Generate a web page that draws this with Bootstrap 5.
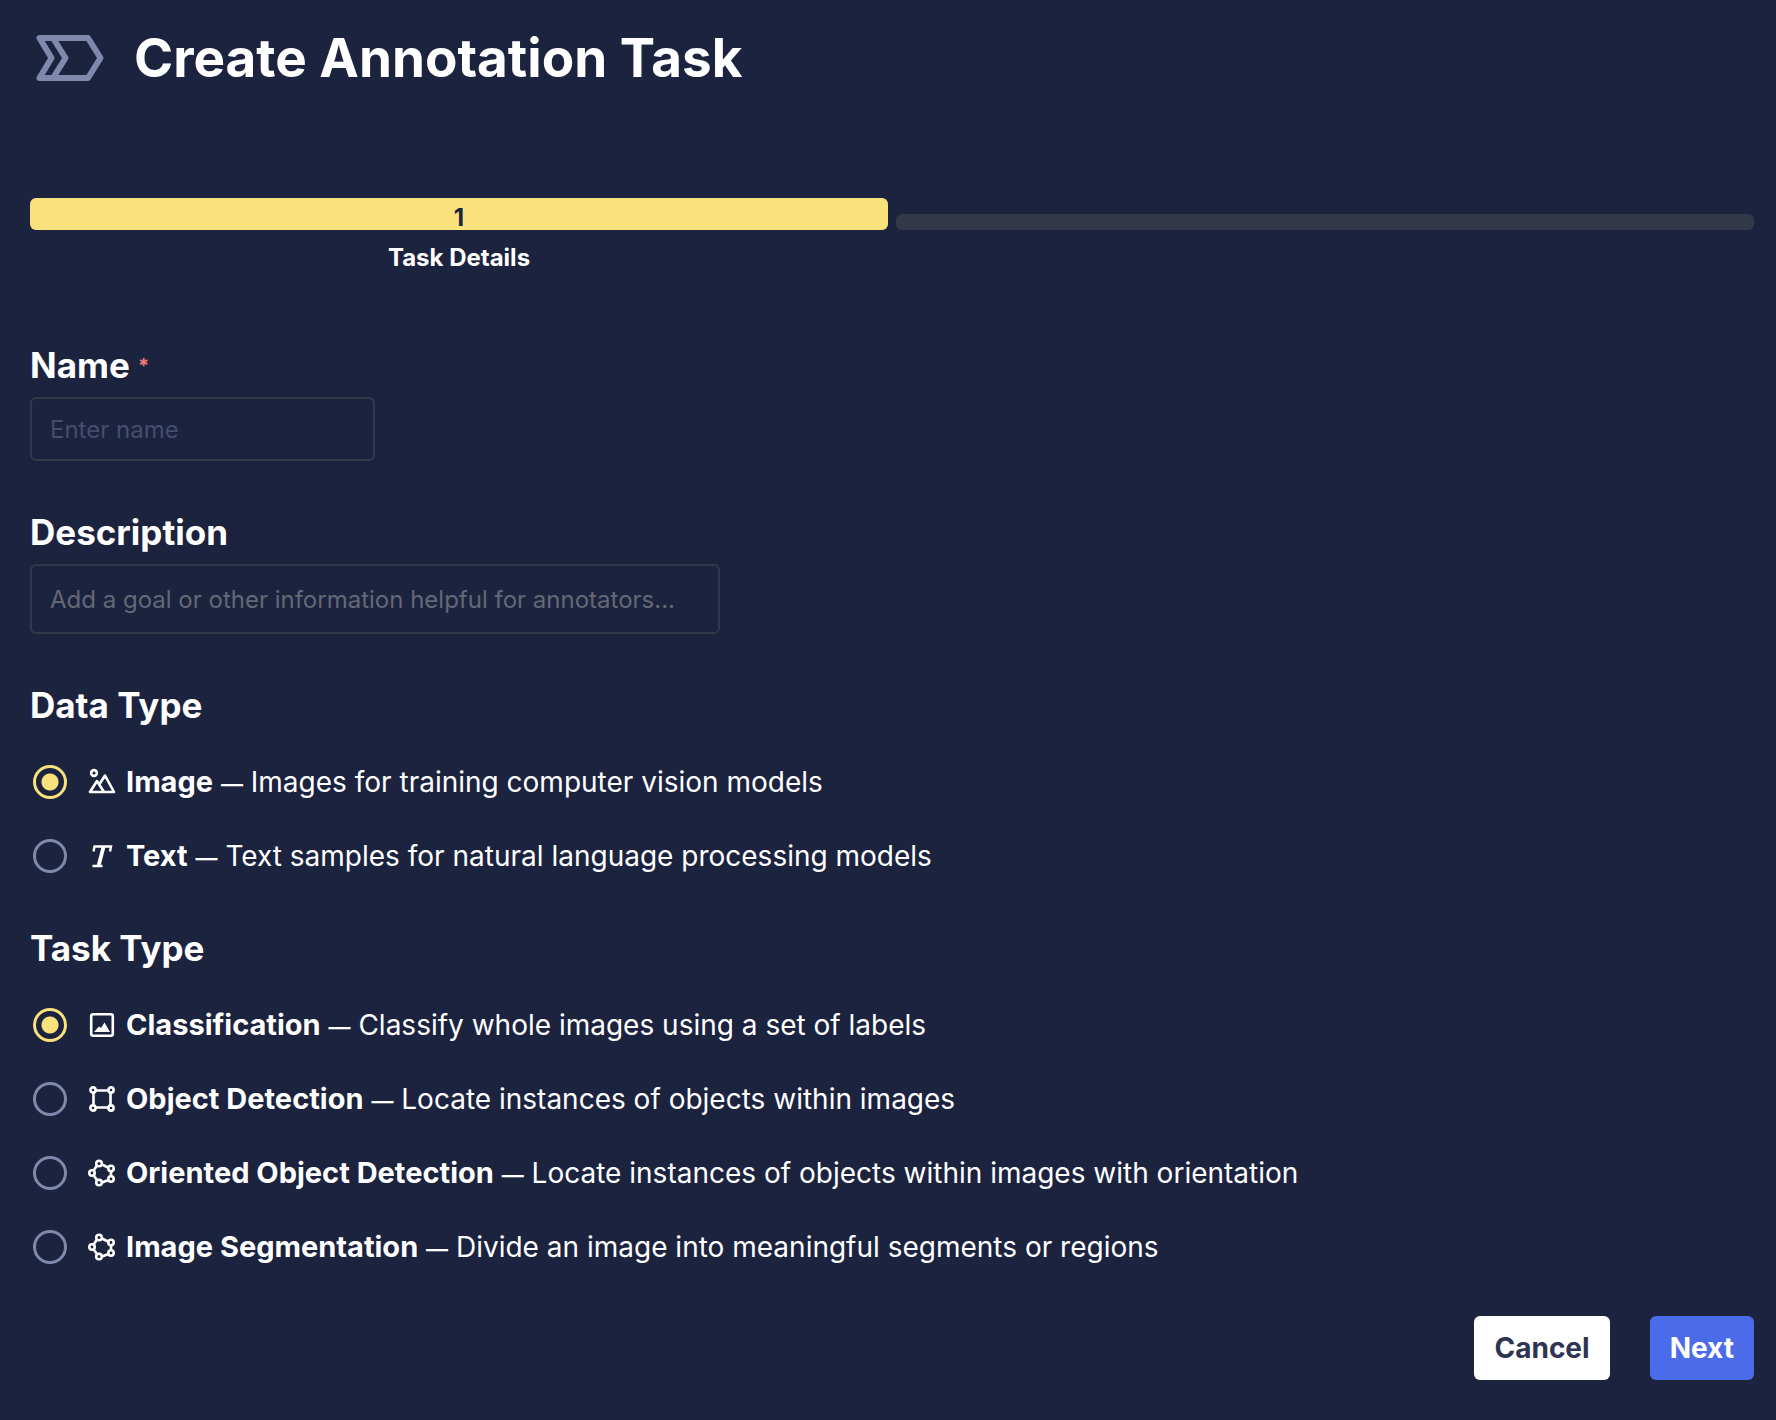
<!DOCTYPE html>
<html lang="en">
<head>
<meta charset="utf-8">
<meta name="viewport" content="width=device-width, initial-scale=1">
<title>Create Annotation Task</title>
<link href="https://cdn.jsdelivr.net/npm/bootstrap@5.3.0/dist/css/bootstrap.min.css" rel="stylesheet">
<style>
  body { background: #1c233f; color: #fff; font-family: Inter, "Liberation Sans", sans-serif; font-size: 28px; line-height: 34px; }
  .page { padding: 24px 22px 40px 30px; }
  .page-title { font-size: 53px; line-height: 68px; font-weight: 700; }
  .title-icon { width: 80px; height: 68px; }
  .stepper { margin-top: 106px; gap: 8px; font-size: 24px; line-height: 32px; font-weight: 700; }
  .step { flex: 1 1 0; }
  .step-bar { height: 32px; border-radius: 6px; background: #f9e27c; color: #1c233f; padding-top: 4px; }
  .step-idle { height: 16px; margin-top: 16px; border-radius: 6px; background: #33384b; }
  .step-name { margin-top: 12px; }
  .task-form { margin-top: 69px; }
  .section-title { font-size: 35px; line-height: 44px; font-weight: 700; margin: 0; float: none; }
  .required { color: #ee7c74; font-size: 20px; line-height: 20px; vertical-align: 5px; }
  .form-control.field, .form-control.field:focus { background: transparent; border: 2px solid #33384b; border-radius: 6px; color: #fff; font-size: 24px; line-height: 32px; padding: 15px 18px 13px; box-shadow: none; margin-top: 10px; }
  .name-field { width: 20%; min-width: 240px; }
  .desc-field { width: 40%; min-width: 320px; }
  .field-group { margin-bottom: 49px; }
  .name-field::placeholder { color: #454d6d; opacity: 1; }
  .desc-field::placeholder { color: #646877; opacity: 1; }
  .form-control.desc-field, .form-control.desc-field:focus { height: 70px; min-height: 70px; resize: none; padding-top: 18px; overflow: hidden; }
  .options { margin-top: 38px; gap: 40px; }
  .options strong { font-size: 29px; line-height: 1; }
  .dash { font-size: 22px; line-height: 1; font-weight: 600; }
  .type-group + .type-group { margin-top: 53px; }
  .form-check-input.pick { width: 34px; height: 34px; margin: 0 20px 0 3px; float: none; flex: none; border: 3px solid #7f89ab; background: transparent; box-shadow: none; }
  .form-check-input.pick:checked { border-color: #f9e27c; background: radial-gradient(circle, #f9e27c 8px, transparent 9px); }
  .opt-icon { width: 30px; height: 30px; margin-right: 9px; flex: none; }
  .btn.act { font-size: 28px; line-height: 36px; font-weight: 700; padding: 14px 20px; border: 0; border-radius: 6px; }
  .btn-cancel, .btn-cancel:hover { background: #fff; color: #2e3552; }
  .btn-next, .btn-next:hover { background: #4b6be9; color: #fff; }
  .actions { gap: 40px; margin-top: 52px; }
</style>
</head>
<body>
<svg class="d-none" aria-hidden="true">
  <symbol id="polygon" viewBox="0 0 30 30">
    <g fill="none" stroke="#fff" stroke-width="2.6">
      <path d="M9.600 8 7 12M15 6.500 21 9.500M24 13.500 24 18.500M21.500 22 15 24.500M10 22 7 18"/>
      <circle cx="12" cy="5.500" r="2.800"/><circle cx="24" cy="10.500" r="2.700"/><circle cx="24" cy="21" r="2.700"/><circle cx="12" cy="24.500" r="2.800"/><circle cx="5" cy="15" r="2.700"/>
    </g>
  </symbol>
</svg>
<main class="page container-fluid">
  <header class="d-flex align-items-center">
    <svg class="title-icon flex-shrink-0" viewBox="0 0 80 68" fill="none" stroke="#7f89ab" stroke-width="6" stroke-linejoin="round" aria-hidden="true">
      <path d="M9.500 14H58L70.500 34 58 54H9.500L21.500 34Z"/><path d="M23 14 35.500 34 23 54"/>
    </svg>
    <h1 class="page-title mb-0 ms-4">Create Annotation Task</h1>
  </header>

  <div class="stepper d-flex text-center">
    <div class="step">
      <div class="step-bar">1</div>
      <div class="step-name">Task Details</div>
    </div>
    <div class="step"><div class="step-idle"></div></div>
  </div>

  <form class="task-form">
    <div class="field-group">
      <label class="section-title d-block" for="name">Name <span class="required">*</span></label>
      <input class="form-control field name-field" id="name" type="text" placeholder="Enter name" required>
    </div>
    <div class="field-group">
      <label class="section-title d-block" for="description">Description</label>
      <textarea class="form-control field desc-field d-block" id="description" rows="1" placeholder="Add a goal or other information helpful for annotators..."></textarea>
    </div>

    <fieldset class="type-group">
      <legend class="section-title">Data Type</legend>
      <div class="options d-flex flex-column">
        <div class="d-flex align-items-center">
          <input class="form-check-input pick" type="radio" name="data" id="d-image" checked>
          <label class="d-flex align-items-center" for="d-image">
            <svg class="opt-icon" viewBox="0 0 30 30" fill="none" stroke="#fff" stroke-width="2.600" stroke-linejoin="round" aria-hidden="true"><circle cx="7" cy="6" r="2.900"/><path d="M3 25 10 14 17 25ZM12.500 17 18 8.500 27 25H17"/></svg>
            <span><strong>Image</strong> <span class="dash">—</span> Images for training computer vision models</span>
          </label>
        </div>
        <div class="d-flex align-items-center">
          <input class="form-check-input pick" type="radio" name="data" id="d-text">
          <label class="d-flex align-items-center" for="d-text">
            <svg class="opt-icon" viewBox="0 0 30 30" fill="none" stroke="#fff" aria-hidden="true"><path stroke-width="2.400" d="M6.500 10.500 7.500 5.500H24L23 10.500M5.500 25H15.500"/><path stroke-width="3.800" d="M16.500 6 11.500 25"/></svg>
            <span><strong>Text</strong> <span class="dash">—</span> Text samples for natural language processing models</span>
          </label>
        </div>
      </div>
    </fieldset>

    <fieldset class="type-group">
      <legend class="section-title">Task Type</legend>
      <div class="options d-flex flex-column">
        <div class="d-flex align-items-center">
          <input class="form-check-input pick" type="radio" name="task" id="t-class" checked>
          <label class="d-flex align-items-center" for="t-class">
            <svg class="opt-icon" viewBox="0 0 30 30" aria-hidden="true"><rect x="4.200" y="4.200" width="21.600" height="21.600" rx="2" fill="none" stroke="#fff" stroke-width="2.600"/><path fill="#fff" d="M7 22 12 16.500 14 18 17.500 12.500 23 22Z"/></svg>
            <span><strong>Classification</strong> <span class="dash">—</span> Classify whole images using a set of labels</span>
          </label>
        </div>
        <div class="d-flex align-items-center">
          <input class="form-check-input pick" type="radio" name="task" id="t-detect">
          <label class="d-flex align-items-center" for="t-detect">
            <svg class="opt-icon" viewBox="0 0 30 30" fill="none" stroke="#fff" stroke-width="2.600" aria-hidden="true"><path d="M9 6.500H21M9 23.500H21M6.500 9V21M23.500 9V21"/><circle cx="6" cy="6" r="2.600"/><circle cx="24" cy="6" r="2.600"/><circle cx="6" cy="24" r="2.600"/><circle cx="24" cy="24" r="2.600"/></svg>
            <span><strong>Object Detection</strong> <span class="dash">—</span> Locate instances of objects within images</span>
          </label>
        </div>
        <div class="d-flex align-items-center">
          <input class="form-check-input pick" type="radio" name="task" id="t-oriented">
          <label class="d-flex align-items-center" for="t-oriented">
            <svg class="opt-icon" aria-hidden="true"><use href="#polygon"/></svg>
            <span><strong>Oriented Object Detection</strong> <span class="dash">—</span> Locate instances of objects within images with orientation</span>
          </label>
        </div>
        <div class="d-flex align-items-center">
          <input class="form-check-input pick" type="radio" name="task" id="t-segment">
          <label class="d-flex align-items-center" for="t-segment">
            <svg class="opt-icon" aria-hidden="true"><use href="#polygon"/></svg>
            <span><strong>Image Segmentation</strong> <span class="dash">—</span> Divide an image into meaningful segments or regions</span>
          </label>
        </div>
      </div>
    </fieldset>

    <div class="actions d-flex justify-content-end">
      <button class="btn act btn-cancel" type="button">Cancel</button>
      <button class="btn act btn-next" type="submit">Next</button>
    </div>
  </form>
</main>
<script src="https://cdn.jsdelivr.net/npm/bootstrap@5.3.0/dist/js/bootstrap.bundle.min.js"></script>
</body>
</html>
